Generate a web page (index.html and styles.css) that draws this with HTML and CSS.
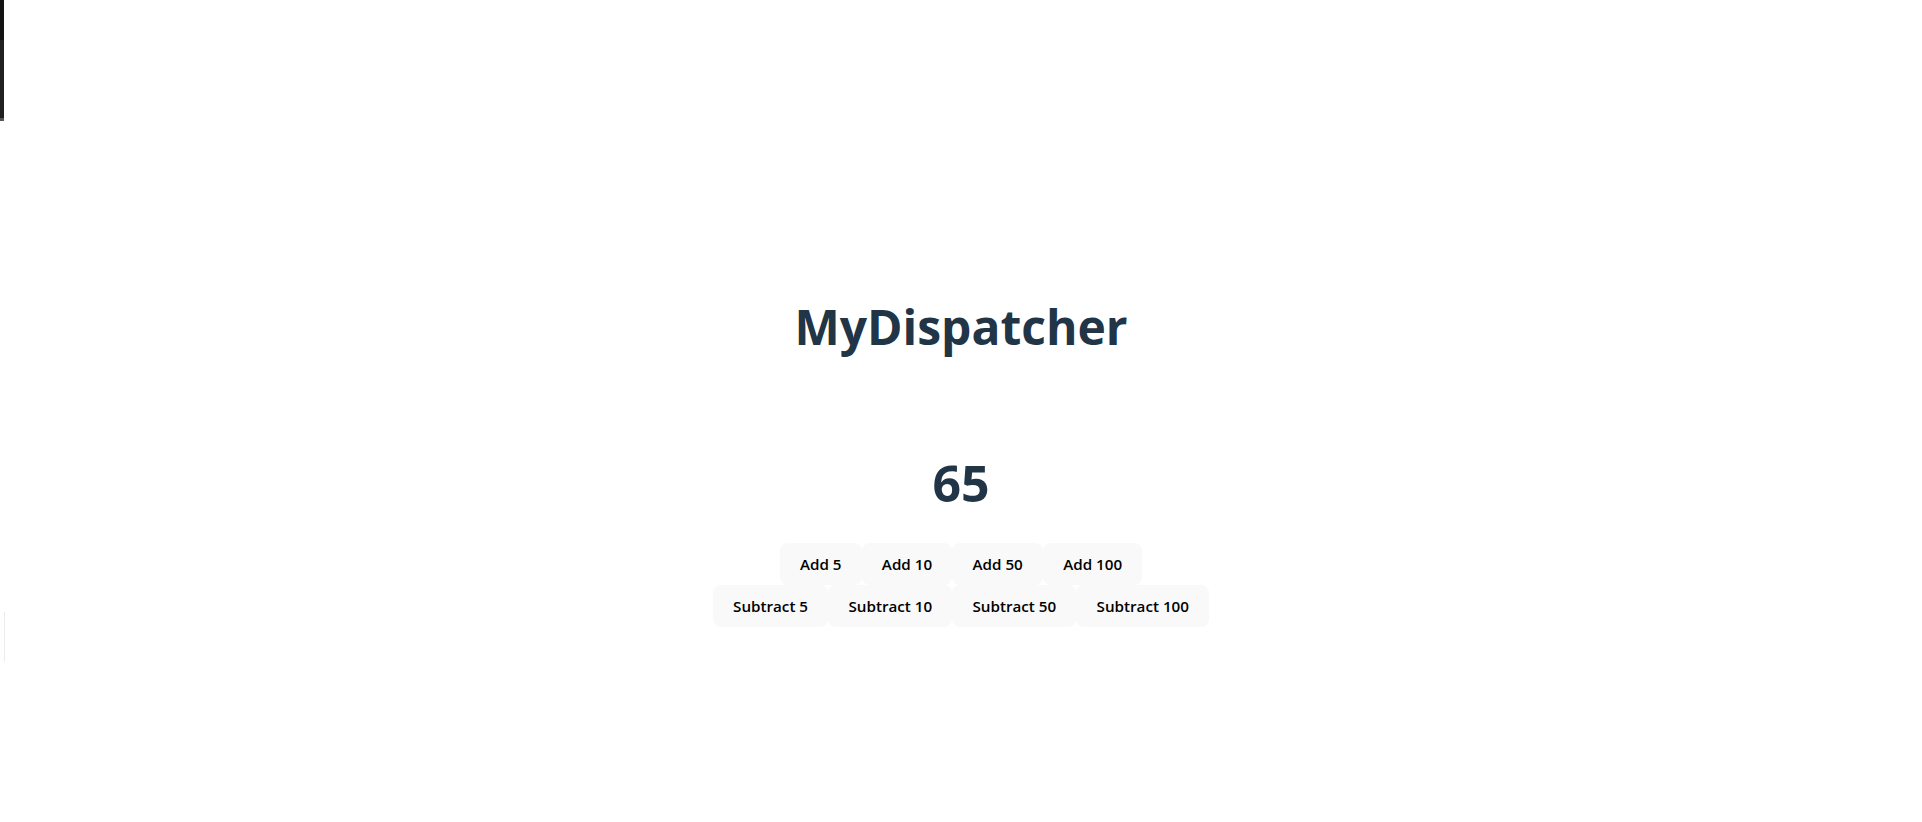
FILE: index.html
```html
<!DOCTYPE html>
<html lang="en">
<head>
<meta charset="utf-8">
<title>MyDispatcher</title>
<link rel="stylesheet" href="styles.css">
</head>
<body>
<div class="edge-bar"></div>
<div class="edge-line"></div>
<main class="app">
  <h1 class="title">MyDispatcher</h1>
  <h1 class="count">65</h1>
  <div class="row">
    <button class="btn">Add 5</button><button class="btn">Add 10</button><button class="btn">Add 50</button><button class="btn">Add 100</button>
  </div>
  <div class="row">
    <button class="btn">Subtract 5</button><button class="btn">Subtract 10</button><button class="btn">Subtract 50</button><button class="btn">Subtract 100</button>
  </div>
</main>
</body>
</html>
```

FILE: styles.css
```css
html, body {
  margin: 0;
  padding: 0;
  background: #ffffff;
}
body {
  font-family: "Open Sans", "Noto Sans", sans-serif;
  color: #213547;
  min-height: 822px;
  overflow: hidden;
}
.edge-bar {
  position: absolute;
  left: 0;
  top: 0;
  width: 4px;
  height: 121px;
  background: linear-gradient(#131313 0, #131313 40px, #202020 40px, #202020 118px, #555 118px);
}
.edge-line {
  position: absolute;
  left: 4px;
  top: 612px;
  width: 1px;
  height: 50px;
  background: #ececec;
}
.app {
  display: flex;
  flex-direction: column;
  align-items: center;
  padding-top: 299px;
}
.title {
  margin: 0;
  font-size: 48px;
  line-height: 56px;
  font-weight: 700;
}
.count {
  margin: 100px 0 0;
  font-size: 50px;
  line-height: 56px;
  font-weight: 700;
}
.row {
  display: flex;
  justify-content: center;
}
.row:first-of-type {
  margin-top: 32px;
}
.btn {
  font-family: inherit;
  font-size: 15.2px;
  font-weight: 600;
  color: #000;
  background: #f9f9f9;
  border: 1px solid transparent;
  border-radius: 8px;
  padding: 0 19.2px;
  height: 42px;
  line-height: 40px;
  cursor: pointer;
}
```
